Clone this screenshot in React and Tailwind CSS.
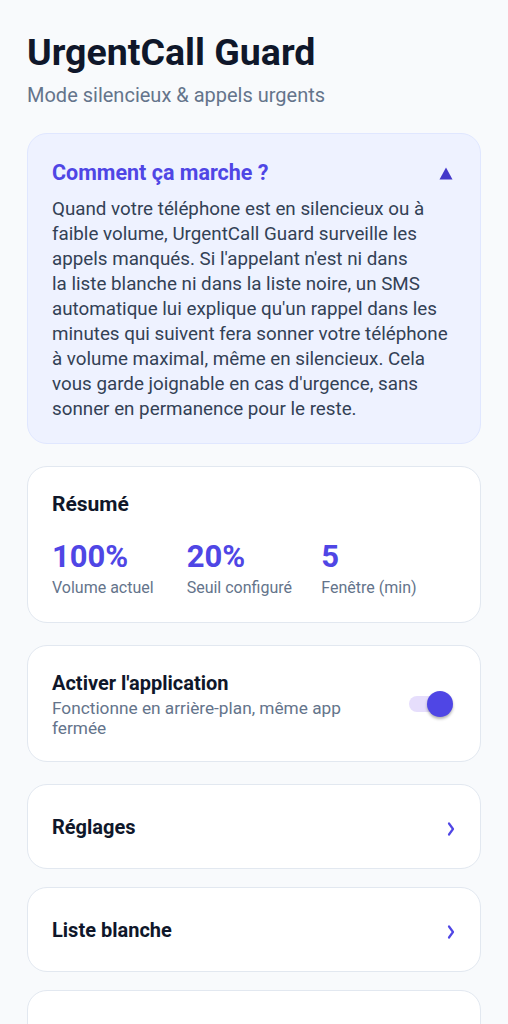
import React from "react";

function Chevron() {
  return (
    <svg width="8" height="16" viewBox="0 0 8 16" fill="none" className="mt-[5px] mr-[1px]">
      <path d="M2 2.5 L6 8 L2 13.5" stroke="#5046e5" strokeWidth="2.2" strokeLinecap="round" strokeLinejoin="round" />
    </svg>
  );
}

function NavCard({ label }) {
  return (
    <div className="flex items-center justify-between h-[85px] px-6 bg-white border border-[#e2e8f0] rounded-[20px]">
      <span className="text-[20px] leading-[26px] font-bold text-[#0f172a]">{label}</span>
      <Chevron />
    </div>
  );
}

function Stat({ value, label }) {
  return (
    <div>
      <div className="text-[31px] leading-[36px] font-bold text-[#4f46e5]">{value}</div>
      <div className="mt-[2px] text-[16px] leading-[22px] text-[#64748b]">{label}</div>
    </div>
  );
}

const lines = [
  "Quand votre téléphone est en silencieux ou à",
  "faible volume, UrgentCall Guard surveille les",
  "appels manqués. Si l'appelant n'est ni dans",
  "la liste blanche ni dans la liste noire, un SMS",
  "automatique lui explique qu'un rappel dans les",
  "minutes qui suivent fera sonner votre téléphone",
  "à volume maximal, même en silencieux. Cela",
  "vous garde joignable en cas d'urgence, sans",
  "sonner en permanence pour le reste.",
];

export default function App() {
  return (
    <div className="min-h-screen bg-[#f8fafc] px-[27px] pt-[30px] pb-10" style={{ fontFamily: "Roboto, 'Noto Sans', sans-serif" }}>
      <h1 className="text-[37.5px] leading-[44px] font-bold text-[#0f172a]">UrgentCall Guard</h1>
      <p className="mt-[8px] text-[20px] leading-[26px] text-[#64748b]">Mode silencieux &amp; appels urgents</p>

      <div className="mt-[25px] bg-[#eef2ff] border border-[#e0e7ff] rounded-[20px] px-6 pt-[25px] pb-[21px]">
        <div className="flex items-center justify-between">
          <span className="text-[21.5px] leading-[28px] font-bold text-[#4f46e5]">Comment ça marche ?</span>
          <svg width="14" height="13" viewBox="0 0 14 13" className="mr-[3px]">
            <path d="M7 0.5 L13.5 12.5 L0.5 12.5 Z" fill="#4338ca" />
          </svg>
        </div>
        <p className="mt-[10px] text-[18.8px] leading-[25px] text-[#334155] whitespace-nowrap">
          {lines.map((l, i) => (
            <React.Fragment key={i}>
              {l}
              {i < lines.length - 1 && <br />}
            </React.Fragment>
          ))}
        </p>
      </div>

      <div className="mt-[22px] bg-white border border-[#e2e8f0] rounded-[20px] px-6 pt-[23px] pb-[23px]">
        <div className="text-[21px] leading-[28px] font-bold text-[#0f172a]">Résumé</div>
        <div className="mt-[21px] grid grid-cols-3">
          <Stat value="100%" label="Volume actuel" />
          <Stat value="20%" label="Seuil configuré" />
          <Stat value="5" label="Fenêtre (min)" />
        </div>
      </div>

      <div className="mt-[22px] bg-white border border-[#e2e8f0] rounded-[20px] px-6 pt-[24px] pb-[23px] flex items-center justify-between">
        <div className="w-[320px]">
          <div className="text-[20px] leading-[26px] font-bold text-[#0f172a]">Activer l'application</div>
          <div className="mt-[2px] text-[17.25px] leading-[20px] text-[#64748b]">Fonctionne en arrière-plan, même app fermée</div>
        </div>
        <div className="relative w-[44px] h-[28px] mr-[3px] flex items-center">
          <div className="w-[38px] h-[16px] rounded-full bg-[#e6defc]" />
          <div className="absolute right-0 top-[1px] w-[26px] h-[26px] rounded-full bg-[#4f46e5] shadow-[0_2px_3px_rgba(0,0,0,0.3)]" />
        </div>
      </div>

      <div className="mt-[22px] flex flex-col gap-[18px]">
        <NavCard label="Réglages" />
        <NavCard label="Liste blanche" />
        <NavCard label="Liste noire" />
      </div>
    </div>
  );
}
